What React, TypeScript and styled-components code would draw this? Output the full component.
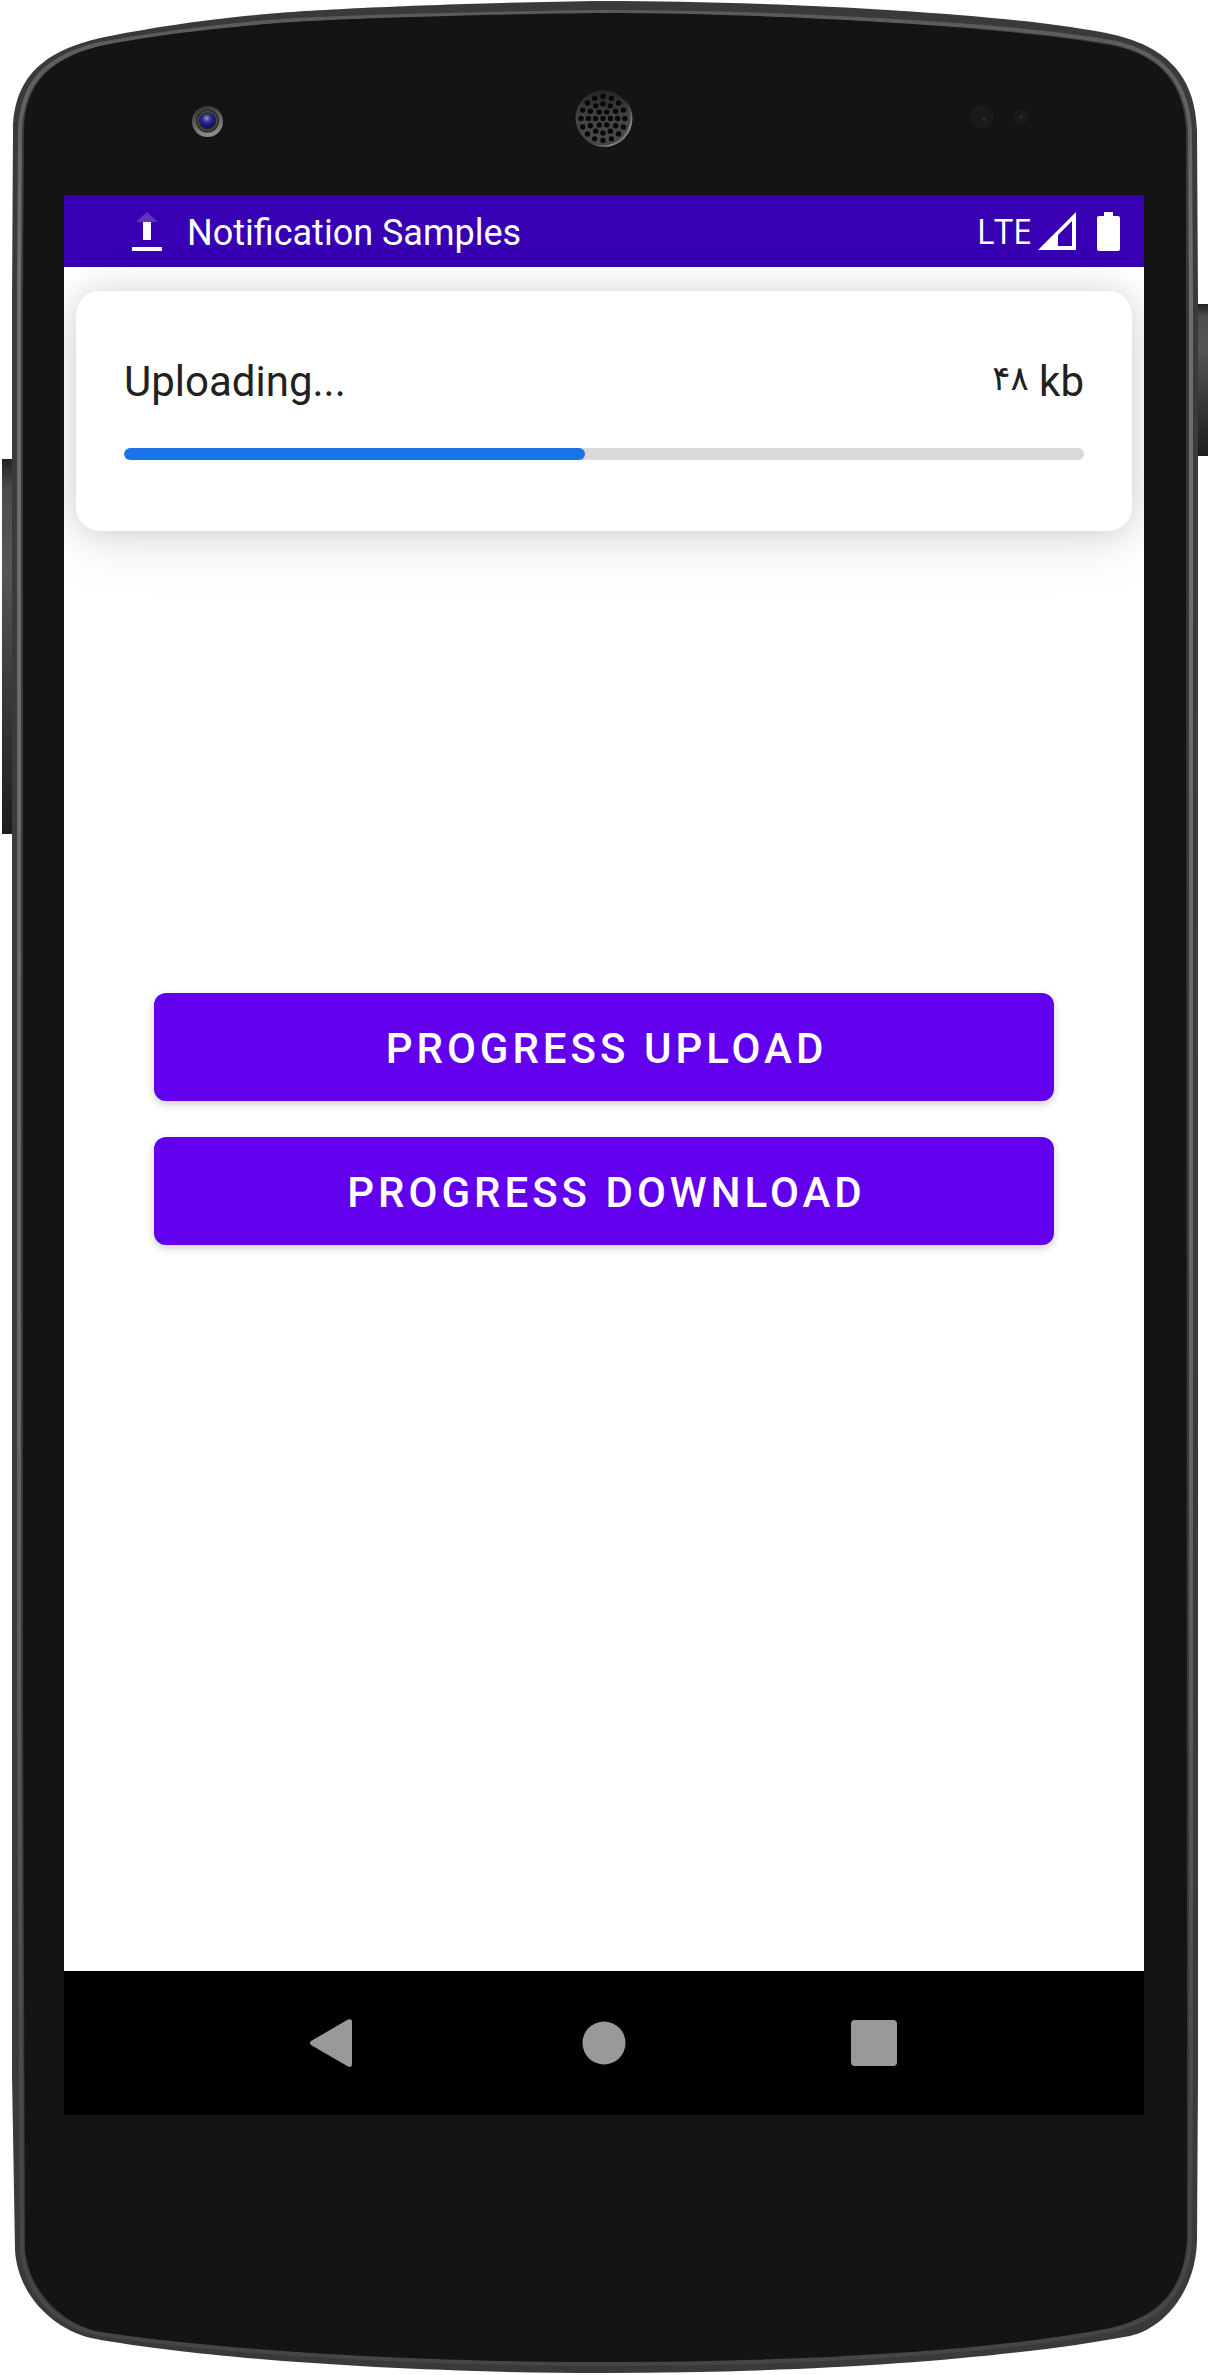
import React from "react";
import styled, { createGlobalStyle } from "styled-components";

const GlobalStyle = createGlobalStyle`
  *, *::before, *::after { box-sizing: border-box; }
  body {
    margin: 0;
    background: #ffffff;
    font-family: Roboto, "DejaVu Sans", sans-serif;
  }
`;

const Phone = styled.div`
  position: relative;
  padding: 195px 66px 260px 64px;
`;

const Shell = styled.svg`
  position: absolute;
  inset: 0;
  width: 100%;
  height: 100%;
  display: block;
`;

const Screen = styled.div`
  position: relative;
  display: flex;
  flex-direction: column;
  aspect-ratio: 9 / 16;
  background: #ffffff;
  overflow: hidden;
`;

const StatusBar = styled.header`
  display: flex;
  align-items: center;
  height: 72px;
  padding: 0 24px 0 68px;
  background: #3700b3;
  color: #ffffff;
  font-size: 36px;
  line-height: 44px;
`;

const StatusTitle = styled.span`
  flex: 1;
  padding-left: 25px;
  padding-top: 4px;
`;

const Network = styled.span`
  font-family: "Open Sans", sans-serif;
  font-size: 34px;
  margin-right: 6px;
`;

const StatusIcon = styled.svg<{ $gap?: number }>`
  display: block;
  flex: none;
  margin-right: ${(p) => p.$gap ?? 0}px;
`;

const Notice = styled.section`
  position: absolute;
  top: 96px;
  left: 12px;
  right: 12px;
  padding: 65px 48px 71px;
  border-radius: 24px;
  background: #ffffff;
  box-shadow: 0 12px 60px rgba(0, 0, 0, 0.1), 0 0 30px rgba(0, 0, 0, 0.12);
  color: #212121;
  font-size: 42px;
`;

const NoticeRow = styled.div`
  display: flex;
  justify-content: space-between;
  line-height: 52px;
`;

const Amount = styled.span`
  font-size: 34px;
  vertical-align: 6px;
  line-height: 1;
`;

const Progress = styled.progress`
  appearance: none;
  display: block;
  width: 100%;
  height: 12px;
  margin-top: 40px;
  border: 0;
  border-radius: 6px;
  overflow: hidden;
  background: #dadada;

  &::-webkit-progress-bar {
    background: #dadada;
    border-radius: 6px;
  }

  &::-webkit-progress-value {
    background: #1a73e8;
    border-radius: 6px;
  }
`;

const Actions = styled.main`
  flex: 1;
  display: flex;
  flex-direction: column;
  justify-content: center;
  gap: 36px;
  padding: 0 90px;
`;

const ActionButton = styled.button`
  height: 108px;
  padding: 3px 0 0 5px;
  border: 0;
  border-radius: 12px;
  background: #6200ee;
  box-shadow: 0 3px 8px rgba(0, 0, 0, 0.2);
  color: #ffffff;
  font: 500 42px/52px Roboto, sans-serif;
  letter-spacing: 4px;
  text-transform: uppercase;
  cursor: pointer;
`;

const NavBar = styled.nav`
  display: flex;
  justify-content: center;
  align-items: center;
  gap: 174px;
  height: 144px;
  background: #000000;
`;

const NavButton = styled.button`
  display: grid;
  place-items: center;
  width: 96px;
  height: 96px;
  padding: 0;
  border: 0;
  background: transparent;
  color: #999999;
  cursor: pointer;
`;

const BODY =
  "M604 1 C500 2 330 8 267 14 C200 20 150 28 100 38 C50 50 14 72 13 130 L12 300 L12 2075 L15 2250 C18 2300 60 2333 96 2339 C200 2358 400 2373 604 2373 C810 2373 1000 2360 1130 2336 C1165 2328 1196 2290 1197 2240 L1198 2075 L1198 300 L1197 130 C1195 70 1160 46 1115 35 C1010 12 760 1 604 1 Z";
const GLASS =
  "M604 13 C500 14 330 18 267 24 C200 30 150 36 100 46 C52 58 25 82 24 130 L23 300 L23 1700 L25 2250 C29 2290 60 2322 96 2331 C200 2348 400 2362 604 2362 C810 2362 1000 2350 1110 2328 C1158 2317 1184 2290 1187 2240 L1187 2075 L1186 300 L1186 130 C1184 84 1160 56 1115 46 C1010 26 760 13 604 13 Z";
const RIM =
  "M604 12 C500 13 330 17 267 22 C200 28 150 35 100 44 C49 56 22 80 20 130 L19 300 L19 1700 L22 2250 C26 2294 58 2325 95 2333 C200 2350 400 2364 604 2364 C810 2364 1000 2352 1112 2330 C1161 2319 1187 2292 1190 2240 L1191 2075 L1191 300 L1190 130 C1187 82 1163 54 1116 43 C1010 23 760 12 604 12 Z";

const rings = [
  { count: 1, radius: 0 },
  { count: 6, radius: 7.4 },
  { count: 12, radius: 14.6 },
  { count: 16, radius: 22 },
];

const holes = rings.flatMap(({ count, radius }) =>
  Array.from({ length: count }, (_, i) => {
    const angle = (i * 2 * Math.PI) / count;
    return { x: 603 + radius * Math.cos(angle), y: 118.5 + radius * Math.sin(angle) };
  })
);

function DeviceShell() {
  return (
    <Shell viewBox="0 0 1210 2375" preserveAspectRatio="none" aria-hidden="true">
      <defs>
        <linearGradient id="side" x1="0" y1="0" x2="0" y2="1">
          <stop offset="0" stopColor="#222222" />
          <stop offset="0.08" stopColor="#4c4c4c" />
          <stop offset="0.3" stopColor="#555555" />
          <stop offset="0.6" stopColor="#3c3c3c" />
          <stop offset="1" stopColor="#1c1c1c" />
        </linearGradient>
        <linearGradient id="rim" x1="0" y1="0" x2="0" y2="1">
          <stop offset="0" stopColor="#5a5a5c" />
          <stop offset="0.1" stopColor="#6e6e72" />
          <stop offset="0.6" stopColor="#66666a" />
          <stop offset="0.9" stopColor="#484849" />
          <stop offset="1" stopColor="#464646" />
        </linearGradient>
        <linearGradient id="ring" x1="0" y1="0" x2="0.3" y2="1">
          <stop offset="0" stopColor="#2a2a2a" />
          <stop offset="1" stopColor="#8c8c8c" />
        </linearGradient>
        <linearGradient id="edge" x1="0" y1="0" x2="1" y2="1">
          <stop offset="0.5" stopColor="#161616" />
          <stop offset="0.8" stopColor="#8a8a8a" />
          <stop offset="1" stopColor="#3a3a3a" />
        </linearGradient>
        <linearGradient id="grille" x1="0" y1="0" x2="0" y2="1">
          <stop offset="0" stopColor="#262626" />
          <stop offset="0.5" stopColor="#444444" />
          <stop offset="1" stopColor="#484848" />
        </linearGradient>
        <radialGradient id="lens" cx="0.45" cy="0.35" r="0.6">
          <stop offset="0" stopColor="#9a9cc8" />
          <stop offset="0.4" stopColor="#3a3a80" />
          <stop offset="0.75" stopColor="#1c12b0" />
          <stop offset="1" stopColor="#15123a" />
        </radialGradient>
      </defs>
      <rect x="2" y="459" width="12" height="375" fill="url(#side)" />
      <rect x="1196" y="304" width="12" height="152" fill="url(#side)" />
      <path d={BODY} fill="#3a3a3c" />
      <path d={RIM} fill="none" stroke="url(#rim)" strokeWidth="4" />
      <path d={GLASS} fill="#141414" />

      <circle cx="207.5" cy="121.5" r="15.5" fill="url(#ring)" />
      <circle cx="207.5" cy="121" r="11.5" fill="#2a2928" />
      <circle cx="207.5" cy="121" r="9.5" fill="none" stroke="#5c5a58" strokeWidth="1" />
      <circle cx="207.5" cy="120.5" r="7.5" fill="url(#lens)" />

      <circle cx="604" cy="118.5" r="28.5" fill="url(#edge)" />
      <circle cx="603" cy="118" r="27.5" fill="url(#grille)" />
      {holes.map((h, i) => (
        <circle key={i} cx={h.x} cy={h.y} r="2.7" fill="#080808" />
      ))}

      <circle cx="982" cy="116.5" r="12" fill="#1b1a1a" />
      <circle cx="984" cy="119" r="2" fill="#38231d" />
      <circle cx="1021" cy="116.5" r="8" fill="#1b1a1a" />
      <circle cx="1021" cy="117" r="2" fill="#38231d" />
    </Shell>
  );
}

export default function App() {
  return (
    <>
      <GlobalStyle />
      <Phone>
        <DeviceShell />
        <Screen>
          <StatusBar>
            <StatusIcon width="30" height="40" viewBox="0 0 30 40" aria-hidden="true">
              <path d="M15 1 L26 11 H4 Z" fill="#ffffff" opacity="0.2" />
              <path d="M11 11 H19 V29 H11 Z M0 36 H30 V40 H0 Z" fill="#ffffff" />
            </StatusIcon>
            <StatusTitle>Notification Samples</StatusTitle>
            <Network>LTE</Network>
            <StatusIcon $gap={21} width="38" height="38" viewBox="0 0 38 38" role="img" aria-label="Signal">
              <path fillRule="evenodd" fill="#ffffff" d="M38 0 V38 H0 Z M34 9 L20 23 V34 H34 Z" />
            </StatusIcon>
            <StatusIcon width="23" height="39" viewBox="0 0 23 39" role="img" aria-label="Battery full">
              <path fill="#ffffff" d="M7 0 H16 V4 H21 Q23 4 23 6 V37 Q23 39 21 39 H2 Q0 39 0 37 V6 Q0 4 2 4 H7 Z" />
            </StatusIcon>
          </StatusBar>

          <Actions>
            <ActionButton type="button">Progress upload</ActionButton>
            <ActionButton type="button">Progress download</ActionButton>
          </Actions>

          <NavBar>
            <NavButton type="button" aria-label="Back">
              <svg width="48" height="48" viewBox="0 0 48 48">
                <path fill="currentColor" d="M38 0.6 Q42 -1 42 3 V45 Q42 49 38 47.4 L1 26 Q-1 24 1 22 Z" />
              </svg>
            </NavButton>
            <NavButton type="button" aria-label="Home">
              <svg width="44" height="44" viewBox="0 0 44 44">
                <circle cx="22" cy="22" r="21.5" fill="currentColor" />
              </svg>
            </NavButton>
            <NavButton type="button" aria-label="Recent apps">
              <svg width="46" height="46" viewBox="0 0 46 46">
                <rect width="46" height="46" rx="4" fill="currentColor" />
              </svg>
            </NavButton>
          </NavBar>

          <Notice>
            <NoticeRow>
              <label htmlFor="transfer">Uploading...</label>
              <span>
                <Amount>۴۸</Amount> kb
              </span>
            </NoticeRow>
            <Progress id="transfer" value={48} max={100} />
          </Notice>
        </Screen>
      </Phone>
    </>
  );
}
